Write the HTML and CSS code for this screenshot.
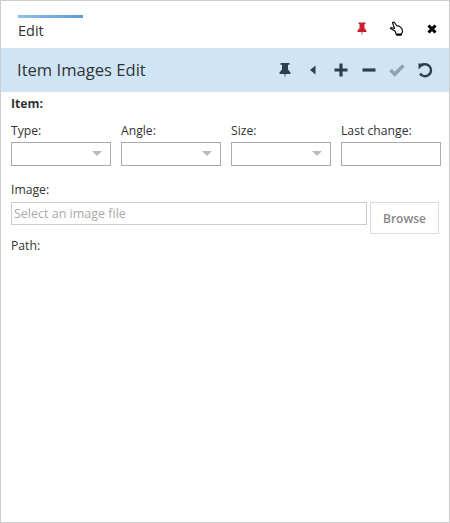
FILE: index.html
```html
<!DOCTYPE html>
<html lang="en">
<head>
  <meta charset="UTF-8" />
  <title>Item Images Edit</title>
  <link rel="stylesheet" href="styles.css">
</head>
<body>

<div class="window">
  <div class="tabbar">
    <div class="tab">Edit</div>
    <div class="win-icons">
      <svg class="win-icon" viewBox="0 0 16 16"><path fill="#c8202c" d="M4.500 1.500h7v1.500H10.500v4.200L12.500 9.500V11H8.500L8 15.500 7.500 11H3.500V9.500L5.500 7.200V3H4.500z"/></svg>
      <svg class="win-icon" viewBox="0 0 16 16"><path fill="#fff" stroke="#000" stroke-width="1.100" stroke-linejoin="round" d="M3.500 1.500l1.500-.5 3 4 1.500-.3 3.500 3 .5 3-1.500 3.300H7.500L6 10 1.500 7.500l.5-1L5.500 7.500z"/><path fill="#000" d="M7.500 12.500h5v2h-5z"/></svg>
      <svg class="win-icon" viewBox="0 0 16 16"><path fill="none" stroke="#000" stroke-width="3" d="M4.500 4.500l7 7m0-7l-7 7"/></svg>
    </div>
  </div>

  <div class="titlebar">
    <h1>Item Images Edit</h1>
    <div class="tools">
      <svg class="tool" viewBox="0 0 16 16"><path fill="#2c3e50" d="M3.500 1h9v1.800H11v4.700l2.500 3V12H8.600L8 16l-.6-4H2.500v-1.500L5 7.500V2.800H3.500z"/></svg>
      <svg class="tool" viewBox="0 0 16 16"><path fill="#2c3e50" d="M10.500 3.500v9L5 8z"/></svg>
      <svg class="tool" viewBox="0 0 16 16"><path fill="none" stroke="#2c3e50" stroke-width="3.200" d="M8 1.500v13M1.500 8h13"/></svg>
      <svg class="tool" viewBox="0 0 16 16"><path fill="none" stroke="#2c3e50" stroke-width="3.200" d="M1.500 8h13"/></svg>
      <svg class="tool" viewBox="0 0 16 16"><path fill="none" stroke="#8fa3b1" stroke-width="3.600" d="M1.500 8l4.200 4.200 8.800-8.800"/></svg>
      <svg class="tool" viewBox="0 0 16 16"><path fill="none" stroke="#2c3e50" stroke-width="2.400" d="M4 3.800A6 6 0 1 1 3 11.500"/><path fill="#2c3e50" d="M1.500 1.500h6.200L1.500 7.500z"/></svg>
    </div>
  </div>

  <div class="content">
    <div class="item-label">Item:</div>

    <div class="fields">
      <div class="field">
        <label>Type:</label>
        <div class="select"><span class="arrow"></span></div>
      </div>
      <div class="field">
        <label>Angle:</label>
        <div class="select"><span class="arrow"></span></div>
      </div>
      <div class="field">
        <label>Size:</label>
        <div class="select"><span class="arrow"></span></div>
      </div>
      <div class="field">
        <label>Last change:</label>
        <div class="select"></div>
      </div>
    </div>

    <label class="image-label">Image:</label>
    <div class="file-row">
      <div class="file-input">Select an image file</div>
      <button class="browse" type="button">Browse</button>
    </div>

    <label class="path-label">Path:</label>
  </div>
</div>

</body>
</html>
```

FILE: styles.css
```css
html, body {
  height: 100%;
}
body {
  font-family: "Open Sans", Arial, sans-serif;
  color: #333;
  background-color: white;
  margin: 0;
  padding: 0;
}
.window {
  box-sizing: border-box;
  height: 523px;
  border: 1px solid #ccc;
  overflow: hidden;
}
.tabbar {
  display: flex;
  justify-content: space-between;
  height: 47px;
  padding-left: 17px;
}
.tab {
  width: 65px;
  height: 26px;
  margin-top: 14px;
  border-top: 3px solid #6fa8dc;
  border-image: linear-gradient(to right, #8fc0ea, #5b9bd8) 1;
  font-size: 14.5px;
  line-height: 26px;
}
.win-icons {
  display: flex;
  gap: 19px;
  padding: 20px 9px 0 0;
}
.win-icon {
  width: 16px;
  height: 16px;
}
.titlebar {
  display: flex;
  justify-content: space-between;
  align-items: center;
  height: 44px;
  padding: 0 16px;
  background-color: #cfe5f6;
}
.titlebar h1 {
  margin: 0 0 2px;
  font-size: 16.6px;
  font-weight: 400;
}
.tools {
  display: flex;
  gap: 12px;
}
.tool {
  width: 16px;
  height: 16px;
}
.content {
  padding: 3px 0 0 10px;
  font-size: 12.2px;
}
.item-label {
  font-weight: bold;
  line-height: 17px;
}
label {
  display: block;
  line-height: 17px;
}
.fields {
  display: flex;
  gap: 10px;
  margin-top: 10px;
}
.field {
  width: 100px;
}
.field label {
  margin-bottom: 3px;
}
.select {
  position: relative;
  box-sizing: border-box;
  height: 24px;
  border: 1px solid #aaa;
}
.arrow {
  position: absolute;
  top: 8px;
  right: 8px;
  border-left: 5px solid transparent;
  border-right: 5px solid transparent;
  border-top: 5px solid #bbb;
}
.image-label {
  margin-top: 15px;
}
.file-row {
  display: flex;
  gap: 3px;
  margin-top: 4px;
  align-items: flex-start;
}
.file-input {
  box-sizing: border-box;
  width: 356px;
  height: 23px;
  border: 1px solid #ccc;
  padding-left: 2px;
  font-size: 12.5px;
  line-height: 21px;
  color: #aaa;
}
.browse {
  box-sizing: border-box;
  width: 69px;
  height: 32px;
  padding: 0;
  border: 1px solid #ddd;
  background: white;
  font-family: inherit;
  font-size: 12px;
  font-weight: 600;
  color: #888;
}
.path-label {
  margin-top: 3px;
}
```
